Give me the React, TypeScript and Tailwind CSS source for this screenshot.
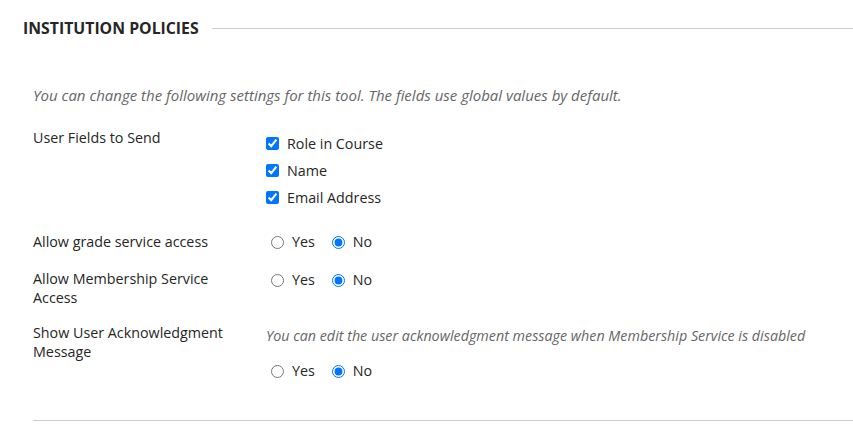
import React from "react";

const font = { fontFamily: '"Open Sans", sans-serif' };

function Radio({ name }: { name: string }) {
  return (
    <div className="flex items-center h-[20px]">
      <label className="flex items-center">
        <input type="radio" name={name} className="m-0 w-[13px] h-[13px] ml-[5px]" />
        <span className="ml-[8px]">Yes</span>
      </label>
      <label className="flex items-center ml-[17px]">
        <input type="radio" name={name} defaultChecked className="m-0 w-[13px] h-[13px]" />
        <span className="ml-[8px]">No</span>
      </label>
    </div>
  );
}

function Check({ label }: { label: string }) {
  return (
    <label className="flex items-center h-[27px]">
      <input type="checkbox" defaultChecked className="m-0 w-[13px] h-[13px]" />
      <span className="ml-[8px]">{label}</span>
    </label>
  );
}

export default function App() {
  return (
    <div className="w-[853px] h-[447px] bg-white text-[14.3px] text-[#262626] leading-[20px] overflow-hidden" style={font}>
      <div className="flex items-center pl-[23px] pt-[18px]">
        <h2 className="text-[15.8px] font-bold leading-[20px] text-[#262626] whitespace-nowrap">INSTITUTION POLICIES</h2>
        <div className="flex-1 h-px bg-[#cdcdcd] ml-[13px]" />
      </div>
      <div className="pl-[33px]">
        <p className="mt-[47px] italic text-[15px] text-[#666666]">You can change the following settings for this tool. The fields use global values by default.</p>
        <div className="flex mt-[23px]">
          <div className="w-[233px]">User Fields to Send</div>
          <div className="mt-[2px]">
            <Check label="Role in Course" />
            <Check label="Name" />
            <Check label="Email Address" />
          </div>
        </div>
        <div className="flex mt-[21px]">
          <div className="w-[233px]">Allow grade service access</div>
          <Radio name="grade" />
        </div>
        <div className="flex mt-[17px]">
          <div className="w-[200px] mr-[33px] leading-[19px]">Allow Membership Service Access</div>
          <div className="mt-px"><Radio name="member" /></div>
        </div>
        <div className="flex mt-[16px]">
          <div className="w-[200px] mr-[33px] leading-[19px]">Show User Acknowledgment Message</div>
          <div>
            <p className="italic text-[#666666] mt-[3px]">You can edit the user acknowledgment message when Membership Service is disabled</p>
            <div className="mt-[15px]"><Radio name="ack" /></div>
          </div>
        </div>
        <div className="h-px bg-[#cdcdcd] mt-[39px]" />
      </div>
    </div>
  );
}
